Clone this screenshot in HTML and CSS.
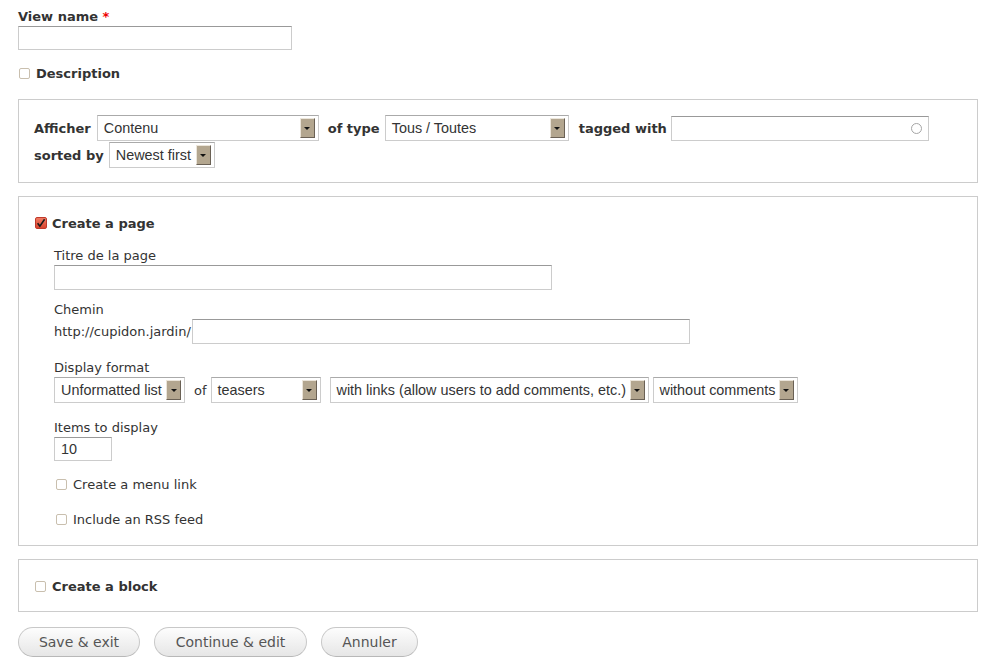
FILE: index.html
```html
<!DOCTYPE html>
<html>
<head>
<meta charset="utf-8">
<link rel="stylesheet" href="styles.css">
</head>
<body>
<div class="form">
  <div class="label-bold">View name <span class="req">*</span></div>
  <input class="text view-name" type="text">
  <div class="check-row desc-row"><span class="cb"></span><span class="cb-label bold">Description</span></div>

  <div class="fieldset fs-display">
    <div class="inline-row">
      <span class="ilabel l-aff">Afficher</span>
      <div class="select w-contenu"><span class="sv">Contenu</span><span class="sa"><span class="tri"></span></span></div>
      <span class="ilabel l-type">of type</span>
      <div class="select w-tous"><span class="sv">Tous / Toutes</span><span class="sa"><span class="tri"></span></span></div>
      <span class="ilabel l-tag">tagged with</span>
      <div class="autocomplete"><span class="throbber"></span></div>
    </div>
    <div class="inline-row row2">
      <span class="ilabel l-sort">sorted by</span>
      <div class="select w-newest"><span class="sv">Newest first</span><span class="sa"><span class="tri"></span></span></div>
    </div>
  </div>

  <div class="fieldset fs-page">
    <div class="check-row"><span class="cb checked"><svg width="12" height="12" viewBox="0 0 12 12"><path d="M2.6 6.2 L4.9 9.2 L9.6 2.2" fill="none" stroke="#1a1a1a" stroke-width="1.6"/></svg></span><span class="cb-label bold">Create a page</span></div>
    <div class="indent">
      <div class="flabel l-title">Titre de la page</div>
      <input class="text w-title" type="text">
      <div class="flabel l-path">Chemin</div>
      <div class="path-row"><span class="prefix">http://cupidon.jardin/</span><input class="text w-path" type="text"></div>
      <div class="flabel l-format">Display format</div>
      <div class="format-row">
        <div class="select w-unf"><span class="sv">Unformatted list</span><span class="sa"><span class="tri"></span></span></div>
        <span class="of">of</span>
        <div class="select w-teasers"><span class="sv">teasers</span><span class="sa"><span class="tri"></span></span></div>
        <div class="select w-links"><span class="sv">with links (allow users to add comments, etc.)</span><span class="sa"><span class="tri"></span></span></div>
        <div class="select w-comments"><span class="sv">without comments</span><span class="sa"><span class="tri"></span></span></div>
      </div>
      <div class="flabel l-items">Items to display</div>
      <input class="text w-items" type="text" value="10">
      <div class="check-row sub first-sub"><span class="cb"></span><span class="cb-label">Create a menu link</span></div>
      <div class="check-row sub second-sub"><span class="cb"></span><span class="cb-label">Include an RSS feed</span></div>
    </div>
  </div>

  <div class="fieldset fs-block">
    <div class="check-row"><span class="cb"></span><span class="cb-label bold">Create a block</span></div>
  </div>

  <div class="buttons">
    <button class="btn b-save">Save &amp; exit</button>
    <button class="btn b-cont">Continue &amp; edit</button>
    <button class="btn b-cancel">Annuler</button>
  </div>
</div>
</body>
</html>
```
FILE: styles.css
```css
html, body {
  margin: 0;
  padding: 0;
  background: #fff;
}
body {
  font-family: "DejaVu Sans", sans-serif;
  font-size: 13px;
  color: #333;
}
.form {
  padding: 8px 11px 0 18px;
}
.label-bold {
  font-weight: bold;
  line-height: 18px;
  height: 18px;
  color: #333;
}
.req {
  color: #e00;
}
.bold {
  font-weight: bold;
}
input.text {
  display: block;
  box-sizing: border-box;
  margin: 0;
  border: 1px solid #ccc;
  border-top-color: #999;
  background: #fff;
  font-family: "Liberation Sans", sans-serif;
  font-size: 14.4px;
  color: #333;
  padding: 0 6px;
  outline: none;
}
.view-name {
  width: 274px;
  height: 24px;
}
.check-row {
  display: flex;
  align-items: center;
  height: 20px;
  line-height: 20px;
}
.desc-row {
  margin-top: 14px;
  padding-left: 1px;
}
.cb {
  box-sizing: border-box;
  width: 11px;
  height: 11px;
  border: 1px solid #c9bfae;
  border-radius: 2px;
  background: #fff;
  margin-right: 6px;
  flex: none;
  position: relative;
  top: -1px;
}
.cb.checked {
  width: 12px;
  height: 12px;
  border: 1px solid #c0392b;
  background: linear-gradient(#f07a62, #d9442e);
  margin-right: 5px;
}
.cb.checked svg {
  position: absolute;
  left: -1px;
  top: -1px;
}
.cb-label {
  color: #333;
}
.fieldset {
  border: 1px solid #ccc;
  box-sizing: border-box;
  width: 960px;
}
.fs-display {
  margin-top: 15px;
  padding: 15px 15px 14px 15px;
}
.inline-row {
  display: flex;
  align-items: center;
  height: 26px;
}
.row2 {
  margin-top: 1px;
}
.ilabel {
  font-weight: bold;
  margin-right: 5px;
}
.l-aff { margin-right: 6px; }
.l-type { margin-right: 5px; }
.l-tag { margin-right: 4px; }
.l-sort { margin-right: 5px; }
.select {
  box-sizing: border-box;
  display: flex;
  align-items: center;
  height: 26px;
  border: 1px solid #ccc;
  border-top-color: #aaa;
  background: #fff;
  font-family: "Liberation Sans", sans-serif;
  font-size: 14.4px;
  color: #333;
  padding-left: 6px;
  margin-right: 9px;
  flex: none;
}
.sv {
  flex: 1;
  min-width: 0;
  white-space: nowrap;
}
.sa {
  box-sizing: border-box;
  width: 15px;
  height: 20px;
  margin: 0 3px 0 2px;
  background: #b3a68f;
  border: 1px solid;
  border-color: #ebe5da #6a6155 #6a6155 #ebe5da;
  display: flex;
  align-items: center;
  justify-content: center;
  flex: none;
}
.tri {
  width: 0;
  height: 0;
  border-left: 3px solid transparent;
  border-right: 3px solid transparent;
  border-top: 3px solid #111;
}
.w-contenu { width: 222px; }
.w-tous { width: 184px; margin-right: 10px; }
.w-newest { width: 106px; }
.autocomplete {
  box-sizing: border-box;
  width: 258px;
  height: 25px;
  border: 1px solid #ccc;
  border-top-color: #999;
  position: relative;
}
.throbber {
  position: absolute;
  right: 6px;
  top: 6px;
  width: 11px;
  height: 11px;
  border: 1.5px solid #a5a5a5;
  border-radius: 50%;
  box-sizing: border-box;
}
.fs-page {
  margin-top: 13px;
  padding: 17px 15px 15px 16px;
}
.indent {
  padding-left: 19px;
}
.flabel {
  line-height: 18px;
  height: 18px;
}
.l-title { margin-top: 13px; }
.l-path { margin-top: 11px; }
.l-format { margin-top: 15px; }
.l-items { margin-top: 16px; }
.w-title {
  width: 498px;
  height: 25px;
}
.path-row {
  display: flex;
  align-items: center;
  height: 25px;
}
.prefix {
  margin-right: 1px;
}
.w-path {
  width: 498px;
  height: 25px;
}
.format-row {
  display: flex;
  align-items: center;
  height: 26px;
}
.of {
  margin-right: 4px;
}
.w-unf { width: 131px; }
.w-teasers { width: 110px; }
.w-links { width: 319px; margin-right: 4px; }
.w-comments { width: 145px; }
.w-items {
  width: 58px;
  height: 24px;
}
.sub {
  padding-left: 2px;
}
.first-sub { margin-top: 14px; }
.second-sub { margin-top: 15px; }
.fs-block {
  margin-top: 13px;
  padding: 17px 15px 14px 16px;
}
.buttons {
  display: flex;
  margin-top: 15px;
}
.btn {
  box-sizing: border-box;
  height: 30px;
  border: 1px solid #c8c8c8;
  border-bottom-color: #b8b8b8;
  border-radius: 15px;
  background: linear-gradient(#fdfdfd, #e6e6e6);
  font-family: "DejaVu Sans", sans-serif;
  font-size: 14px;
  color: #555;
  padding: 0;
  margin: 0 14px 0 0;
  text-align: center;
}
.b-save { width: 122px; }
.b-cont { width: 153px; }
.b-cancel { width: 97px; }
```
